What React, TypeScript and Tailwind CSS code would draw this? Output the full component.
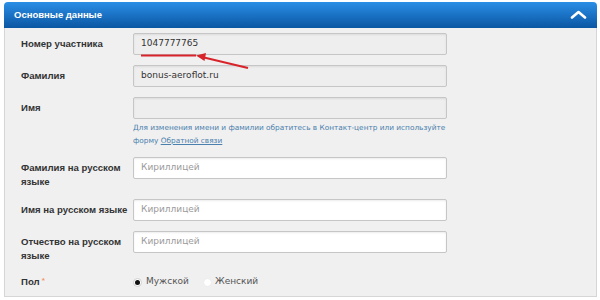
import React from "react";

const font = { fontFamily: '"DejaVu Sans", Verdana, sans-serif' };
const bold = { fontFamily: '"Liberation Sans", Arial, sans-serif' };

function Label({ children }: { children: React.ReactNode }) {
  return (
    <div
      className="w-[112px] shrink-0 whitespace-nowrap pt-[4px] text-[9.6px] font-bold leading-[14px] text-[#333]"
      style={bold}
    >
      {children}
    </div>
  );
}

function Input({ value, placeholder, disabled }: { value?: string; placeholder?: string; disabled?: boolean }) {
  return (
    <div
      className={`flex h-[22px] w-[314px] items-center rounded-[2px] border border-[#c6c6c6] px-[7px] text-[9px] shadow-[inset_0_1px_2px_rgba(0,0,0,0.08)] ${
        disabled ? "bg-[#eeeeee] text-[#333]" : "bg-white text-[#9a9a9a]"
      }`}
    >
      {value ?? placeholder}
    </div>
  );
}

export default function App() {
  return (
    <div className="relative h-[300px] w-[600px] overflow-hidden bg-white pt-[2px]" style={font}>
      <div className="mx-[4px] w-[593px]">
        <div className="flex h-[26px] items-center justify-between rounded-t-[4px] bg-gradient-to-b from-[#2a8fe6] to-[#0b56a3] pl-[10px] pr-[10px]">
          <span className="text-[9.5px] font-bold text-white" style={bold}>
            Основные данные
          </span>
          <svg width="17" height="9" viewBox="0 0 17 9" className="mt-[-2px]">
            <path d="M2 7.5 L8.5 2 L15 7.5" fill="none" stroke="white" strokeWidth="2.6" strokeLinecap="round" strokeLinejoin="round" />
          </svg>
        </div>
        <div className="h-[269px] border-x border-b border-[#d6d6d6] bg-[#f0f0f0] pl-[16px] pt-[5px]">
          <div className="flex">
            <Label>Номер участника</Label>
            <Input value="1047777765" disabled />
          </div>
          <div className="mt-[10px] flex">
            <Label>Фамилия</Label>
            <Input value="bonus-aeroflot.ru" disabled />
          </div>
          <div className="mt-[10px] flex">
            <Label>Имя</Label>
            <div>
              <Input value="" disabled />
              <div className="mt-[2px] w-[318px] text-[7.35px] leading-[13px] text-[#4a7fae]">
                Для изменения имени и фамилии обратитесь в Контакт-центр или используйте форму{" "}
                <span className="underline">Обратной связи</span>
              </div>
            </div>
          </div>
          <div className="mt-[10px] flex">
            <Label>
              Фамилия на русском
              <br />
              языке
            </Label>
            <Input placeholder="Кириллицей" />
          </div>
          <div className="mt-[10px] flex">
            <Label>Имя на русском языке</Label>
            <Input placeholder="Кириллицей" />
          </div>
          <div className="mt-[10px] flex">
            <Label>
              Отчество на русском
              <br />
              языке
            </Label>
            <Input placeholder="Кириллицей" />
          </div>
          <div className="mt-[12px] flex h-[14px] items-center">
            <div className="w-[112px] shrink-0 text-[9.6px] font-bold text-[#333]" style={bold}>
              Пол<span className="ml-[2px] align-top text-[8px] text-[#f2956b]">*</span>
            </div>
            <div className="flex items-center text-[9px] text-[#555]">
              <span className="flex h-[9px] w-[9px] items-center justify-center rounded-full border border-[#d0d0d0] bg-white">
                <span className="h-[5px] w-[5px] rounded-full bg-[#111]" />
              </span>
              <span className="ml-[4px]">Мужской</span>
              <span className="ml-[14px] h-[9px] w-[9px] rounded-full border border-[#ececec] bg-white" />
              <span className="ml-[3px]">Женский</span>
            </div>
          </div>
        </div>
      </div>
      <svg className="pointer-events-none absolute left-0 top-0" width="600" height="300">
        <line x1="141" y1="55.5" x2="196" y2="55.5" stroke="#d8232a" strokeWidth="2" />
        <line x1="248" y1="68" x2="204" y2="57.5" stroke="#d8232a" strokeWidth="2" />
        <polygon points="196,55.5 206,53 204.5,61" fill="#d8232a" />
      </svg>
    </div>
  );
}
